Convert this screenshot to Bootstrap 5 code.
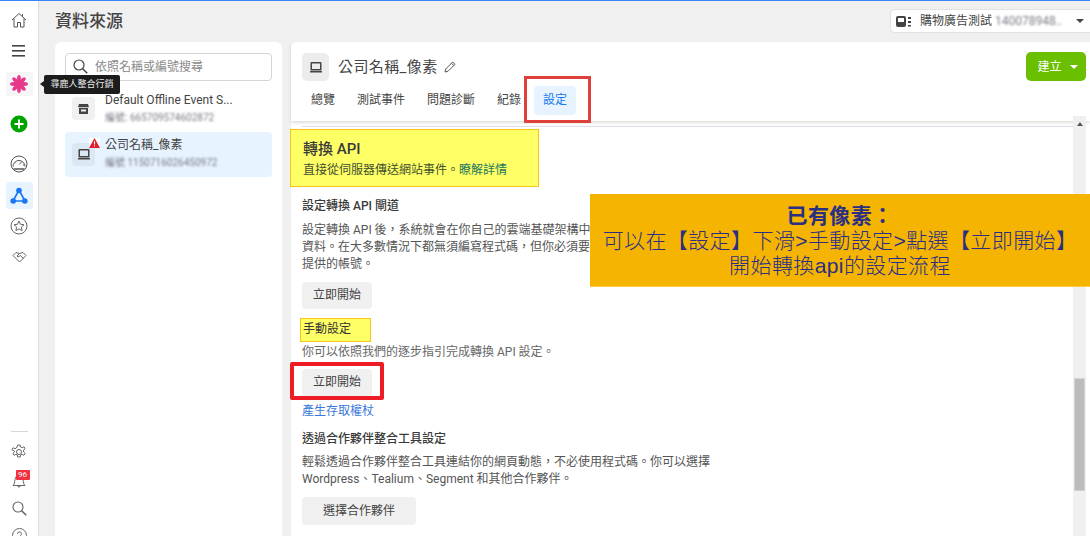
<!doctype html>
<html lang="zh-Hant">
<head>
<meta charset="utf-8">
<title>資料來源</title>
<link href="https://cdn.jsdelivr.net/npm/bootstrap@5.3.0/dist/css/bootstrap.min.css" rel="stylesheet">
<style>
html,body{height:536px;overflow:hidden}
body{font-family:Roboto,"Noto Sans CJK TC",sans-serif;font-size:12px;color:#444;background:#f0f0f0;border-top:1px solid #3b82f6;line-height:17px;position:relative}
.rail{width:39px;background:#fff;border-right:1px solid #dcdcdc;flex:none}
.rail-i{width:27px;height:28px;display:flex;align-items:center;justify-content:center;border-radius:3px;flex:none}
.rail-i svg{display:block}
.ri-home{margin-top:5px}.ri-menu{margin-top:3px}
.ri-pink{margin-top:7px;height:24px;background:#f6f6f6}
.ri-plus{margin-top:14px}.ri-gauge{margin-top:12px}
.ri-net{margin-top:4px;height:27px;background:#e7f3ff}
.ri-star{margin-top:3px}.ri-hand{margin-top:3px}
.rail-rule{width:17px;height:1px;background:#d8d8d8;margin-top:auto}
.ri-gear{margin-top:6px}.ri-bell{margin-top:1px;position:relative}.ri-search{margin-top:-1px}.ri-help{margin-top:-1px;margin-bottom:-13px}
.bell-count{position:absolute;left:10px;top:3px;width:14px;height:10px;padding:0;border-radius:1px;background:#f0303f;font:400 8px/10px Roboto,sans-serif;color:#fff}
.topline{height:41px;padding:0 0 0 16px}
.page-title{font-size:17px;font-weight:500;color:#444;margin:0;line-height:24px;padding-bottom:1px}
.acct{width:200px;height:24px;margin-top:-1px;background:#fff;border:1px solid #e2e2e2;border-right:0;border-radius:5px 0 0 5px;padding-left:5px;overflow:hidden}
.acct-name{margin-left:9px;color:#444;white-space:nowrap}
.blurid{filter:blur(1.3px);color:#7b7b88;white-space:nowrap}
.caret-d{width:0;height:0;border-left:4px solid transparent;border-right:4px solid transparent;border-top:4px solid #444}
.workrow{padding-left:16px;gap:9px;height:494px}
.left-panel{width:227px;flex:none;background:#fff;border-radius:6px 6px 0 0;padding:11px 10px}
.search-wrap{height:28px}
.search-wrap svg{position:absolute;left:8px;top:6px}
.search-in{height:28px;padding:0 0 0 29px;font-size:12px;border:1px solid #d5d5d5;border-radius:4px;color:#444}
.search-in::placeholder{color:#8a8a8a}
.src-list{margin-top:8px;gap:5px}
.src-item{border:0;padding:0 0 0 7px;height:38px;display:flex;align-items:center;color:#444;background:#fff;border-radius:4px!important;position:relative}
.src-on{height:45px;background:#e7f3ff}
.src-on>div{padding-bottom:2px}
.src-ico{width:23px;height:23px;border-radius:4px;background:#f0f0f0;display:flex;align-items:center;justify-content:center;flex:none;margin-right:10px;position:relative}
.src-on .src-ico{background:#dbe7f2}
.src-warn{position:absolute;left:17px;top:-5px;width:11px;height:10px;background:#fff;display:block}
.src-name{line-height:16px;white-space:nowrap}
.src-id{line-height:14px;margin-top:3px;font-size:10px}
.right-panel{background:#fff;border-radius:6px 0 0 0;position:relative;min-width:0}
.rp-head{height:79px;padding:11px 4px 0 11px;box-shadow:0 2px 3px rgba(0,0,0,.13);position:relative}
.px-ico{width:27px;height:28px;background:#ececec;border-radius:5px;flex:none}
.px-title{margin-left:9px;font-size:15px;font-weight:400;color:#444;line-height:28px;letter-spacing:.4px}
.make-btn{width:60px;height:29px;margin-top:-1px;background:#69bf00;border:0;border-radius:5px;color:#fff;font-size:12px;padding:0 0 0 3px;gap:8px}
.make-btn:hover{background:#69bf00;color:#fff}
.make-btn .caret-d{border-top-color:#fff}
.tabs{margin-top:5px;gap:4px}
.tabs .nav-link{height:29px;padding:6px 9px;font-size:12px;color:#444;border-radius:4px}
.tabs .nav-link.active{background:#e7f3ff;color:#1877f2}
.rp-body{padding:0 17px 0 11px;margin-right:17px}
.rp-rule{height:1px;background:#dddde8;margin-top:5px;margin-right:-17px}
.hl{background:#ffff66;border:1px solid #f5c518;margin-left:-12px}
.hl-api{height:58px;width:249px;margin-top:2px;padding:9px 0 0 12px}
.hl-api h2{font-size:15px;font-weight:500;line-height:20px;margin:0;color:#3a3a3a}
.hl-api p{margin:3px 0 0;line-height:17px;color:#3f5030}
.hl-api a{color:#257a5c;text-decoration:none}
.sec-h{font-size:12px;font-weight:500;line-height:17px;margin:0;color:#3a3a3a}
.mt11{margin-top:11px}
.sec-p{margin:7px 0 0;color:#555}
.sec-p2{margin-top:2px;color:#666}
.sec-p3{margin-top:6px}
.gbtn{display:block;height:27px;background:#f0f0f0;border:0;border-radius:4px;font-size:12px;color:#444;padding:0;line-height:27px}
.gbtn:hover{background:#f0f0f0;color:#444}
.w70{width:70px}.w114{width:114px;height:28px}
.mt9{margin-top:9px}.mt8{margin-top:8px}
.hl-manual{height:24px;width:71px;margin-left:-2px;margin-top:9px;padding:1px 0 0 2px;line-height:18px;color:#333;font-weight:400}
.tok-link{display:block;margin-top:7px;color:#3b78dc;text-decoration:none}
.fake-sb{position:absolute;left:782px;top:74px;bottom:0;width:13px;background:#f0f0f0}
.fake-sb i{position:absolute;left:4px;top:6px;border-left:3px solid transparent;border-right:3px solid transparent;border-bottom:4px solid #555}
.fake-sb b{position:absolute;left:2px;top:263px;width:9px;height:111px;background:#bcbcbc;outline:1px solid #d4d4d4}
.tip{position:absolute;left:44px;top:74px;width:76px;height:19px;background:#1c1c1c;color:#eee;font-size:9px;line-height:19px;text-align:center;border-radius:2px;white-space:nowrap}
.tip::before{content:"";position:absolute;left:-4px;top:6px;border-top:3px solid transparent;border-bottom:3px solid transparent;border-right:4px solid #1c1c1c}
.redbox{position:absolute;pointer-events:none}
.red-a{left:524px;top:75px;width:67px;height:47px;border:3px solid #e0403a}
.red-b{left:290px;top:361px;width:94px;height:38px;border:4px solid #ee1c25;border-radius:2px}
.callout{position:absolute;left:590px;top:193px;width:500px;height:93px;background:#f5b400;color:#2a2f85;text-align:center;font-family:"Liberation Sans","Noto Sans CJK TC",sans-serif;font-size:21px;font-weight:300;letter-spacing:.4px;line-height:25px;padding-top:9px;border-bottom:1px solid #ffc83d}
.callout strong{font-weight:700;display:block}
</style>
</head>
<body>
<div class="d-flex" style="height:535px">
  <nav class="rail d-flex flex-column align-items-center">
    <div class="rail-i ri-home"><svg width="16" height="16" viewBox="0 0 16 16" fill="none" stroke="#555" stroke-width="1"><path d="M1 8 8 1.500 15 8M3 6.500V15h3.500v-4.500h3V15H13V6.500M11.500 2v2.500"/></svg></div>
    <div class="rail-i ri-menu"><svg width="14" height="12" viewBox="0 0 14 12" fill="#444"><rect y="0" width="13" height="1.600"/><rect y="5" width="13" height="1.600"/><rect y="10" width="13" height="1.600"/></svg></div>
    <div class="rail-i ri-pink"><svg width="18" height="18" viewBox="0 0 18 18" fill="#e8388c"><ellipse cx="9" cy="4" rx="1.900" ry="4"/><ellipse cx="9" cy="14" rx="1.900" ry="4"/><ellipse cx="9" cy="4" rx="1.900" ry="4" transform="rotate(45 9 9)"/><ellipse cx="9" cy="14" rx="1.900" ry="4" transform="rotate(45 9 9)"/><ellipse cx="9" cy="4" rx="1.900" ry="4" transform="rotate(90 9 9)"/><ellipse cx="9" cy="14" rx="1.900" ry="4" transform="rotate(90 9 9)"/><ellipse cx="9" cy="4" rx="1.900" ry="4" transform="rotate(135 9 9)"/><ellipse cx="9" cy="14" rx="1.900" ry="4" transform="rotate(135 9 9)"/><circle cx="9" cy="9" r="3.500"/></svg></div>
    <div class="rail-i ri-plus"><svg width="18" height="18" viewBox="0 0 18 18"><circle cx="9" cy="9" r="8.500" fill="#00a400"/><path d="M9 4.500v9M4.500 9h9" stroke="#fff" stroke-width="2"/></svg></div>
    <div class="rail-i ri-gauge"><svg width="18" height="18" viewBox="0 0 18 18" fill="none" stroke="#555"><circle cx="9" cy="9" r="8"/><path d="M3 11.500a6 6 0 0 1 12 0M9 9.500 12 6.500M5 7.500l.8.8M9 5v1M13 10h1"/><path d="M3.500 14h11" stroke-width="1.500"/></svg></div>
    <div class="rail-i ri-net"><svg width="18" height="18" viewBox="0 0 18 18" fill="#1877f2"><path d="M9 3 3 14h12z" fill="none" stroke="#1877f2" stroke-width="1.600"/><circle cx="9" cy="3.500" r="2.800"/><circle cx="3.200" cy="14" r="2.800"/><circle cx="14.800" cy="14" r="2.800"/></svg></div>
    <div class="rail-i ri-star"><svg width="18" height="18" viewBox="0 0 18 18" fill="none" stroke="#666"><circle cx="9" cy="9" r="8"/><path d="m9 4 1.500 3.300 3.500.4-2.600 2.400.7 3.500L9 11.900l-3.100 1.700.7-3.500L4 7.700l3.500-.4z"/></svg></div>
    <div class="rail-i ri-hand"><svg width="15" height="12" viewBox="0 0 15 12" fill="none" stroke="#666"><path d="M1 4.500 4 1.500l3.500 1L11 1.500l3 3-6.500 6.500zM7.500 2.500 5 5l1 1 2.500-1.500 3 3"/></svg></div>
    <div class="rail-rule"></div>
    <div class="rail-i ri-gear"><svg width="16" height="16" viewBox="0 0 16 16" fill="none" stroke="#666"><circle cx="8" cy="8" r="2.500"/><path d="M6.800 1h2.400l.4 2 1.500.7 1.800-1 1.200 2-1.600 1.400v1.800l1.600 1.400-1.200 2-1.800-1-1.500.7-.4 2H6.800l-.4-2-1.500-.7-1.800 1-1.200-2 1.600-1.400V7.100L.9 5.700l1.200-2 1.800 1 1.500-.7z"/></svg></div>
    <div class="rail-i ri-bell"><svg width="14" height="16" viewBox="0 0 14 16" fill="none" stroke="#666"><path d="M1 12.500c1.500-1.500 1.500-3 2-6S5 2 7 2s3.500 1.500 4 4.500.5 4.500 2 6zM5.500 12.500c0 2 3 2 3 0"/></svg><span class="badge bell-count">96</span></div>
    <div class="rail-i ri-search"><svg width="15" height="15" viewBox="0 0 15 15" fill="none" stroke="#666" stroke-width="1.100"><circle cx="6" cy="6" r="5"/><path d="m9.700 9.700 4.500 4.500" stroke-width="1.600"/></svg></div>
    <div class="rail-i ri-help"><svg width="15" height="15" viewBox="0 0 15 15" fill="none" stroke="#666"><circle cx="7.500" cy="7.500" r="7"/><path d="M5.500 5.800a2 2 0 1 1 2.800 1.900c-.6.300-.8.700-.8 1.300M7.500 10.500v1"/></svg></div>
  </nav>
  <main class="flex-grow-1 d-flex flex-column" style="min-width:0">
    <div class="topline d-flex align-items-center justify-content-between">
      <h1 class="page-title">資料來源</h1>
      <div class="acct d-flex align-items-center">
        <svg width="15" height="13" viewBox="0 0 15 13" fill="#444" class="flex-shrink-0"><rect x="0" y="1" width="10" height="11" rx="2"/><rect x="2" y="3" width="6" height="4" fill="#fff"/><rect x="12" y="2" width="3" height="2"/><rect x="12" y="6" width="3" height="2"/><rect x="12" y="10" width="3" height="1.500"/></svg>
        <span class="acct-name">購物廣告測試</span><span class="blurid" style="margin-left:3px">140078948..</span>
        <span class="caret-d flex-shrink-0" style="margin-left:14px"></span>
      </div>
    </div>
    <div class="workrow d-flex">
      <aside class="left-panel">
        <div class="search-wrap position-relative">
          <svg width="15" height="15" viewBox="0 0 15 15" fill="none" stroke="#444" stroke-width="1.200"><circle cx="6" cy="6" r="5"/><path d="m9.700 9.700 4.500 4.500" stroke-width="1.500"/></svg>
          <input class="form-control search-in" type="text" placeholder="依照名稱或編號搜尋">
        </div>
        <div class="list-group src-list">
          <div class="list-group-item src-item">
            <span class="src-ico"><svg width="11" height="11" viewBox="0 0 11 11" fill="#444"><path d="M1 1h9l1 3.200H0zM1 5h9v6H1z"/><rect x="3" y="6.500" width="5" height="2" fill="#f0f0f0"/></svg></span>
            <div><div class="src-name">Default Offline Event S...</div><div class="src-id blurid">編號: 665709574602872</div></div>
          </div>
          <div class="list-group-item src-item src-on">
            <span class="src-ico"><svg width="12" height="11" viewBox="0 0 12 11" fill="#444"><path d="M1.500 0h9A1 1 0 0 1 11.500 1v7.500h-11V1a1 1 0 0 1 1-1z"/><rect x="2" y="1.500" width="8" height="5.500" fill="#dbe7f2"/><rect y="9" width="12" height="1.600" rx=".5"/></svg>
              <span class="src-warn"><svg width="11" height="10" viewBox="0 0 11 10" style="display:block"><path d="M5.500 0 11 10H0z" fill="#e0202c"/><path d="M5.500 3.200v3.300M5.500 7.500v1.100" stroke="#fff" stroke-width="1.100"/></svg></span></span>
            <div><div class="src-name">公司名稱_像素</div><div class="src-id blurid">編號 1150716026450972</div></div>
          </div>
        </div>
      </aside>
      <section class="right-panel flex-grow-1">
        <header class="rp-head">
          <div class="d-flex align-items-start">
            <div class="px-ico d-flex align-items-center justify-content-center"><svg width="12" height="11" viewBox="0 0 12 11" fill="#444"><path d="M1.500 0h9A1 1 0 0 1 11.500 1v7.500h-11V1a1 1 0 0 1 1-1z"/><rect x="2" y="1.500" width="8" height="5.500" fill="#ececec"/><rect y="9" width="12" height="1.600" rx=".5"/></svg></div>
            <h2 class="px-title mb-0">公司名稱_像素</h2>
            <svg style="margin:8px 0 0 6px" width="12" height="12" viewBox="0 0 12 12" fill="none" stroke="#555"><path d="M1 11l.7-3L8.700 1l2.300 2.300-7 7zM7.500 2.300l2.200 2.200"/></svg>
            <button class="btn make-btn d-flex align-items-center justify-content-center ms-auto" type="button">建立<span class="caret-d"></span></button>
          </div>
          <ul class="nav tabs">
            <li class="nav-item"><a class="nav-link" href="#">總覽</a></li>
            <li class="nav-item"><a class="nav-link" href="#">測試事件</a></li>
            <li class="nav-item"><a class="nav-link" href="#">問題診斷</a></li>
            <li class="nav-item"><a class="nav-link" href="#">紀錄</a></li>
            <li class="nav-item"><a class="nav-link active" href="#">設定</a></li>
          </ul>
        </header>
        <div class="rp-body">
          <div class="rp-rule"></div>
          <div class="hl hl-api">
            <h2>轉換 API</h2>
            <p>直接從伺服器傳送網站事件。<a href="#">瞭解詳情</a></p>
          </div>
          <h3 class="sec-h mt11">設定轉換 API 閘道</h3>
          <p class="sec-p">設定轉換 API 後&#65292;系統就會在你自己的雲端基礎架構中<br>資料。在大多數情況下都無須編寫程式碼&#65292;但你必須要<br>提供的帳號。</p>
          <button class="btn gbtn w70 mt9" type="button">立即開始</button>
          <h3 class="sec-h hl hl-manual">手動設定</h3>
          <p class="sec-p sec-p2">你可以依照我們的逐步指引完成轉換 API 設定。</p>
          <button class="btn gbtn w70 mt8" type="button">立即開始</button>
          <a class="tok-link" href="#">產生存取權杖</a>
          <h3 class="sec-h mt11">透過合作夥伴整合工具設定</h3>
          <p class="sec-p sec-p3">輕鬆透過合作夥伴整合工具連結你的網頁動態&#65292;不必使用程式碼。你可以選擇<br>Wordpress、Tealium、Segment 和其他合作夥伴。</p>
          <button class="btn gbtn w114 mt9" type="button">選擇合作夥伴</button>
        </div>
        <div class="fake-sb"><i></i><b></b></div>
      </section>
    </div>
  </main>
</div>
<div class="tip">尋鹿人整合行銷</div>
<div class="redbox red-a"></div>
<div class="redbox red-b"></div>
<aside class="callout"><strong>已有像素&#65306;</strong>可以在【設定】下滑&gt;手動設定&gt;點選【立即開始】<br>開始轉換api的設定流程</aside>
</body>
</html>
